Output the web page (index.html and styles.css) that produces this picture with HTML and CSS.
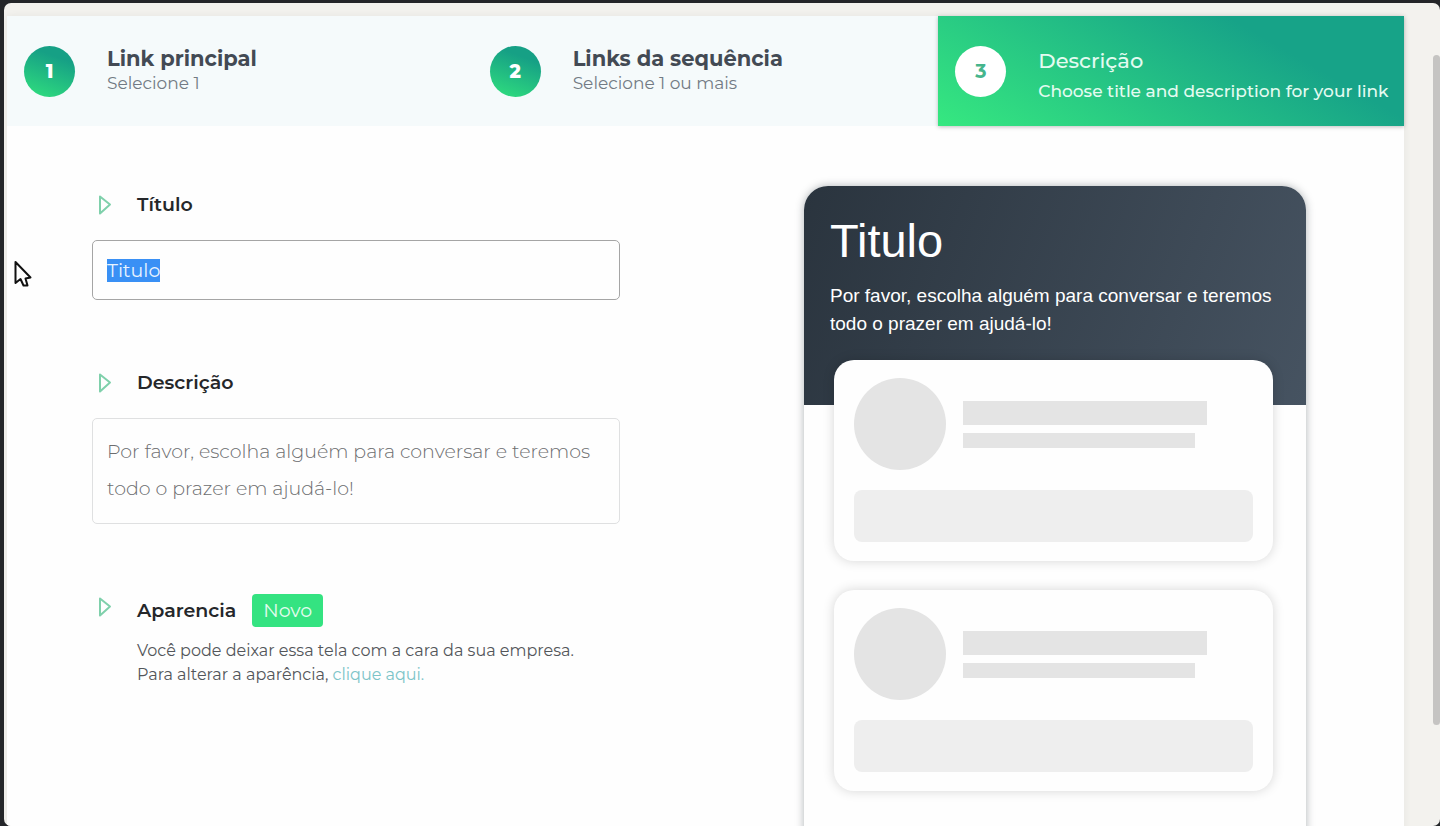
FILE: index.html
```html
<!DOCTYPE html>
<html lang="pt-BR">
<head>
<meta charset="utf-8">
<meta name="viewport" content="width=device-width, initial-scale=1">
<title>Descrição</title>
<link rel="stylesheet" href="styles.css">
</head>
<body>
<div class="window">
  <main class="panel">
    <ol class="steps">
      <li class="step">
        <span class="step-number">1</span>
        <div class="step-text"><strong class="step-title">Link principal</strong><span class="step-hint">Selecione 1</span></div>
      </li>
      <li class="step">
        <span class="step-number">2</span>
        <div class="step-text"><strong class="step-title">Links da sequência</strong><span class="step-hint">Selecione 1 ou mais</span></div>
      </li>
      <li class="step step-active">
        <span class="step-number">3</span>
        <div class="step-text"><strong class="step-title">Descrição</strong><span class="step-hint">Choose title and description for your link</span></div>
      </li>
    </ol>
    <div class="content">
      <form class="form">
        <div class="field">
          <div class="field-head">
            <svg class="marker" viewBox="0 0 14 20" aria-hidden="true"><path d="M2 1.5 12 9.5 2 18.5Z"/></svg>
            <label class="label" for="title">Título</label>
          </div>
          <input class="control control-title" id="title" type="text" value="Titulo">
        </div>
        <div class="field">
          <div class="field-head">
            <svg class="marker" viewBox="0 0 14 20" aria-hidden="true"><path d="M2 1.5 12 9.5 2 18.5Z"/></svg>
            <label class="label" for="description">Descrição</label>
          </div>
          <textarea class="control control-area" id="description" rows="2">Por favor, escolha alguém para conversar e teremos todo o prazer em ajudá-lo!</textarea>
        </div>
        <section class="appearance">
          <svg class="marker" viewBox="0 0 14 20" aria-hidden="true"><path d="M2 1.5 12 9.5 2 18.5Z"/></svg>
          <div>
            <h2 class="appearance-title">Aparencia <span class="badge">Novo</span></h2>
            <p class="appearance-text">Você pode deixar essa tela com a cara da sua empresa.<br>Para alterar a aparência, <a class="link" href="#">clique aqui.</a></p>
          </div>
        </section>
      </form>
      <aside class="preview">
        <header class="preview-head">
          <h1 class="preview-title">Titulo</h1>
          <p class="preview-text">Por favor, escolha alguém para conversar e teremos todo o prazer em ajudá-lo!</p>
        </header>
        <div class="cards">
          <div class="card">
            <div class="card-person">
              <div class="avatar"></div>
              <div class="lines"><div class="line line-name"></div><div class="line line-role"></div></div>
            </div>
            <div class="card-action"></div>
          </div>
          <div class="card">
            <div class="card-person">
              <div class="avatar"></div>
              <div class="lines"><div class="line line-name"></div><div class="line line-role"></div></div>
            </div>
            <div class="card-action"></div>
          </div>
        </div>
      </aside>
    </div>
  </main>
  <div class="scroll-thumb"></div>
  <svg class="cursor" viewBox="0 0 18 28" aria-hidden="true"><path d="M1.5 2V23L6.5 19 9.5 25.5H13.5L11.5 18.5 16.5 17.5Z"/></svg>
</div>
<script src="script.js"></script>
</body>
</html>
```
FILE: styles.css
```css
* { box-sizing: border-box; }

body {
  margin: 0;
  height: 100vh;
  padding: 3px 0 0 4px;
  overflow: hidden;
  background: #242629;
  color: #25272a;
  font-family: Montserrat, Inter, "Open Sans", sans-serif;
}

h1, h2, p, ol { margin: 0; padding: 0; }

.window {
  position: relative;
  height: 100%;
  padding: 13px 36px 0 3px;
  overflow: hidden;
  border-radius: 7px;
  background: #f3f2ee;
}

.panel {
  min-height: 100%;
  background: #fefefe;
  box-shadow: 0 0 8px rgba(0, 0, 0, 0.06);
}

.steps {
  display: grid;
  grid-template-columns: repeat(3, 1fr);
  list-style: none;
  background: #f5fafb;
}

.step {
  display: flex;
  align-items: center;
  gap: 32px;
  height: 110px;
  padding-left: 17px;
  color: #434a54;
}

.step-number {
  display: flex;
  flex: none;
  align-items: center;
  justify-content: center;
  width: 51px;
  height: 51px;
  border-radius: 50%;
  background: linear-gradient(200deg, #16a085 25%, #2fdc7e 95%);
  color: #fff;
  font-size: 19px;
  font-weight: 800;
}

.step-text {
  display: flex;
  flex-direction: column;
  padding-bottom: 3px;
  white-space: nowrap;
}

.step-title {
  font-size: 21px;
  font-weight: 700;
  line-height: 26px;
}

.step-hint {
  color: #727a84;
  font-size: 17px;
  font-weight: 400;
  line-height: 22px;
}

.step-active {
  background: linear-gradient(30deg, #36e880 0%, #17a388 73%);
  box-shadow: 0 1px 4px rgba(0, 0, 0, 0.25);
  color: #e4fbf1;
}

.step-active .step-number {
  background: #fff;
  color: #46b58c;
  font-weight: 700;
}

.step-active .step-text { gap: 6px; padding: 8px 0 0; }
.step-active .step-title { font-weight: 500; }
.step-active .step-hint { color: #e4fbf1; font-weight: 500; }

.content {
  display: grid;
  grid-template-columns: 528fr 502fr;
  gap: 184px;
  padding: 60px 98px 0 85px;
}

.form {
  display: flex;
  flex-direction: column;
  gap: 70px;
  padding-top: 6px;
}

.field-head {
  display: flex;
  align-items: center;
  gap: 25px;
  height: 26px;
  margin-bottom: 22px;
  padding-left: 6px;
}

.marker {
  flex: none;
  width: 14px;
  height: 20px;
  fill: none;
  stroke: #7fd0ab;
  stroke-width: 2;
  stroke-linejoin: round;
}

.label, .appearance-title {
  color: #25272a;
  font-size: 19px;
  font-weight: 600;
  line-height: 26px;
}

.control {
  display: block;
  width: 100%;
  height: 60px;
  padding: 0 14px;
  border: 1px solid #a5a5a5;
  border-radius: 5px;
  outline: none;
  background: #fefefe;
  color: #6c6d6f;
  font-family: inherit;
  font-size: 19px;
  font-weight: 300;
}

.control::selection { background: #3990f5; color: #e8f3ff; }

.control-title { font-weight: 400; }

.control-area {
  height: 106px;
  padding: 14px;
  overflow: hidden;
  border-color: #dfe0e1;
  line-height: 37px;
  resize: none;
}

.appearance {
  display: flex;
  align-items: flex-start;
  gap: 25px;
  padding-left: 6px;
}

.appearance .marker { margin-top: 3px; }

.appearance-title {
  display: flex;
  align-items: center;
  gap: 16px;
  line-height: 33px;
}

.badge {
  padding: 0 11px;
  border-radius: 4px;
  background: #34e381;
  color: #e2fcee;
  font-size: 19px;
  font-weight: 400;
}

.appearance-text {
  margin-top: 12px;
  color: #53565a;
  font-size: 16px;
  font-weight: 400;
  line-height: 24px;
  white-space: nowrap;
}

.link { color: #7cc4c8; text-decoration: none; }

.preview {
  min-height: 700px;
  border-radius: 24px;
  background: #fefefe;
  box-shadow: 0 0 8px rgba(30, 40, 50, 0.35);
  font-family: "Liberation Sans", Arial, sans-serif;
}

.preview-head {
  height: 219px;
  padding: 28px 26px 0;
  border-radius: 24px 24px 0 0;
  background: linear-gradient(110deg, #2a343e, #465361);
  color: #fff;
}

.preview-title {
  font-size: 47px;
  font-weight: 400;
  line-height: 54px;
}

.preview-text {
  margin-top: 14px;
  font-size: 19px;
  line-height: 28px;
}

.cards {
  display: grid;
  gap: 29px;
  margin-top: -45px;
  padding: 0 33px 30px 30px;
}

.card {
  padding: 18px 20px 19px;
  border-radius: 20px;
  background: #fefefe;
  box-shadow: 0 0 12px rgba(0, 0, 0, 0.16);
}

.card-person {
  display: flex;
  align-items: center;
  gap: 17px;
}

.avatar {
  flex: none;
  width: 92px;
  height: 92px;
  border-radius: 50%;
  background: #e4e4e4;
}

.lines {
  display: grid;
  flex: 1;
  gap: 8px;
}

.line { background: #e4e4e4; }
.line-name { width: 84%; height: 24px; }
.line-role { width: 80%; height: 15px; }

.card-action {
  height: 52px;
  margin-top: 20px;
  border-radius: 8px;
  background: #eeeeee;
}

.scroll-thumb {
  position: absolute;
  top: 52px;
  right: 0;
  bottom: 101px;
  width: 7px;
  border-radius: 4px;
  background: #c5c4c2;
}

.cursor {
  position: absolute;
  top: 257px;
  left: 10px;
  width: 18px;
  height: 28px;
  fill: #fff;
  stroke: #111;
  stroke-width: 2;
  stroke-linejoin: round;
}
```
FILE: script.js
```js
const title = document.getElementById("title");
title.focus();
title.select();
```
